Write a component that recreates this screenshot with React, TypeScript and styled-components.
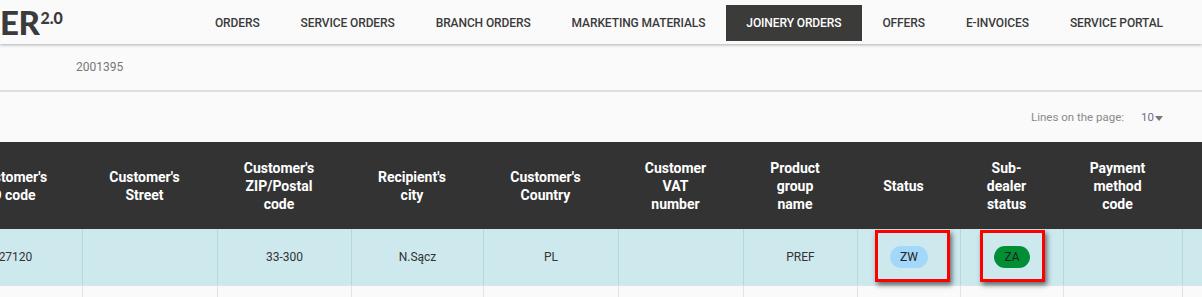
import React from 'react'
import styled, { createGlobalStyle } from 'styled-components'

const GlobalStyle = createGlobalStyle`
  html, body {
    margin: 0;
    padding: 0;
    background: #fafafa;
  }
  body {
    font-family: Roboto, 'Liberation Sans', sans-serif;
    color: #333;
    overflow: hidden;
  }
`

const Page = styled.div`
  width: 1202px;
  height: 297px;
  overflow: hidden;
  background: #fafafa;
`

const TopBar = styled.header`
  position: relative;
  z-index: 2;
  display: flex;
  align-items: center;
  height: 44px;
  background: #fafafa;
  box-shadow: 0 1px 3px rgba(0, 0, 0, 0.3);
`

const Logo = styled.div`
  display: flex;
  align-items: flex-start;
  align-self: flex-start;
  padding-top: 6px;
  font-family: Lato, 'Open Sans', sans-serif;
  font-weight: 900;
  color: #3b3b3b;
`

const LogoWord = styled.span`
  font-size: 33px;
  line-height: 33px;
  letter-spacing: -0.5px;
`

const LogoVersion = styled.span`
  font-size: 16px;
  line-height: 16px;
  margin-top: 4px;
  margin-left: 1px;
`

const Nav = styled.nav`
  display: flex;
  align-items: center;
  margin-left: auto;
  margin-right: 18px;
  margin-top: 1px;
`

const NavItem = styled.a<{ $active?: boolean }>`
  display: flex;
  align-items: center;
  height: 36px;
  padding: 0 21px 0 20px;
  font-size: 12px;
  font-weight: 500;
  letter-spacing: -0.1px;
  text-transform: uppercase;
  text-decoration: none;
  color: ${p => (p.$active ? '#fff' : '#3a3a3a')};
  background: ${p => (p.$active ? '#3b3b39' : 'transparent')};
`

const InfoBar = styled.div`
  display: flex;
  align-items: center;
  height: 46px;
  padding-left: 76px;
  border-bottom: 2px solid #dedede;
  font-size: 12px;
  color: #777;
`

const Toolbar = styled.div`
  display: flex;
  align-items: center;
  justify-content: flex-end;
  height: 50px;
  padding-right: 39px;
  font-size: 11.5px;
`

const PagerLabel = styled.span`
  color: #8a8a8a;
`

const PagerValue = styled.span`
  display: flex;
  align-items: center;
  margin-left: 17px;
  color: #746c88;
`

const Caret = styled.span`
  width: 0;
  height: 0;
  margin-left: 1px;
  margin-top: 2px;
  border-left: 4px solid transparent;
  border-right: 4px solid transparent;
  border-top: 5px solid #777;
`

const TableViewport = styled.div`
  overflow: hidden;
`

const Table = styled.table<{ $width: number; $shift: number }>`
  border-collapse: collapse;
  table-layout: fixed;
  width: ${p => p.$width}px;
  margin-left: ${p => -p.$shift}px;
`

const HeadRow = styled.tr`
  height: 87px;
`

const HeadCell = styled.th<{ $w: number }>`
  box-sizing: border-box;
  width: ${p => p.$w}px;
  padding: 0 11px 0 0;
  background: #333;
  color: #fff;
  font-size: 14px;
  font-weight: 700;
  line-height: 18px;
  text-align: center;
  vertical-align: middle;
  white-space: pre;

  &:first-child {
    padding-right: 7px;
  }
`

const BodyRow = styled.tr<{ $selected?: boolean }>`
  height: ${p => (p.$selected ? 56 : 24)}px;
  background: ${p => (p.$selected ? '#cde9ee' : '#fafafa')};
`

const Cell = styled.td<{ $selected?: boolean }>`
  position: relative;
  padding: 0;
  border-left: 1px solid ${p => (p.$selected ? '#b7d7dc' : '#e3e3e3')};
  border-bottom: 1px solid ${p => (p.$selected ? '#d9e6e8' : '#e3e3e3')};
  font-size: 12px;
  color: #333;
  text-align: center;
  vertical-align: middle;
  white-space: nowrap;
`

const Badge = styled.span<{ $bg: string }>`
  display: inline-flex;
  align-items: center;
  height: 22px;
  padding: 0 10px;
  border-radius: 11px;
  background: ${p => p.$bg};
  color: #222;
  font-size: 12px;
`

const Highlight = styled.span<{ $left: number; $right: number }>`
  position: absolute;
  top: 1px;
  height: 52px;
  left: ${p => p.$left}px;
  right: ${p => p.$right}px;
  box-sizing: border-box;
  border: 3px solid #f00;
  box-shadow: 2px 3px 5px rgba(0, 0, 0, 0.55);
  pointer-events: none;
`

type Column = {
  label: string
  width: number
  value?: string
  badge?: { text: string; bg: string; left: number; right: number }
}

const columns: Column[] = [
  { label: "Customer's\nID code", width: 134, value: '27120' },
  { label: "Customer's\nStreet", width: 135 },
  { label: "Customer's\nZIP/Postal\ncode", width: 134, value: '33-300' },
  { label: "Recipient's\ncity", width: 132, value: 'N.Sącz' },
  { label: "Customer's\nCountry", width: 135, value: 'PL' },
  { label: 'Customer\nVAT\nnumber', width: 125 },
  { label: 'Product\ngroup\nname', width: 114, value: 'PREF' },
  { label: 'Status', width: 103, badge: { text: 'ZW', bg: '#a3d8fb', left: 17, right: 10 } },
  { label: 'Sub-\ndealer\nstatus', width: 103, badge: { text: 'ZA', bg: '#008f35', left: 19, right: 18 } },
  { label: 'Payment\nmethod\ncode', width: 119 },
  { label: '', width: 120 },
]

const navItems = [
  'Orders',
  'Service orders',
  'Branch orders',
  'Marketing materials',
  'Joinery orders',
  'Offers',
  'E-invoices',
  'Service portal',
]

const tableWidth = columns.reduce((sum, c) => sum + c.width, 0)

export default function App() {
  return (
    <Page>
      <GlobalStyle />
      <TopBar>
        <Logo>
          <LogoWord>ER</LogoWord>
          <LogoVersion>2.0</LogoVersion>
        </Logo>
        <Nav>
          {navItems.map(item => (
            <NavItem $active={item === 'Joinery orders'} key={item}>
              {item}
            </NavItem>
          ))}
        </Nav>
      </TopBar>

      <InfoBar>2001395</InfoBar>

      <Toolbar>
        <PagerLabel>Lines on the page:</PagerLabel>
        <PagerValue>
          10
          <Caret />
        </PagerValue>
      </Toolbar>

      <TableViewport>
        <Table $shift={52} $width={tableWidth}>
          <thead>
            <HeadRow>
              {columns.map((c, i) => (
                <HeadCell $w={c.width} key={i}>
                  {c.label}
                </HeadCell>
              ))}
            </HeadRow>
          </thead>
          <tbody>
            <BodyRow $selected>
              {columns.map((c, i) => (
                <Cell $selected key={i}>
                  {c.value}
                  {c.badge && (
                    <>
                      <Badge $bg={c.badge.bg}>{c.badge.text}</Badge>
                      <Highlight $left={c.badge.left} $right={c.badge.right} />
                    </>
                  )}
                </Cell>
              ))}
            </BodyRow>
            <BodyRow>
              {columns.map((c, i) => (
                <Cell key={i} />
              ))}
            </BodyRow>
          </tbody>
        </Table>
      </TableViewport>
    </Page>
  )
}
